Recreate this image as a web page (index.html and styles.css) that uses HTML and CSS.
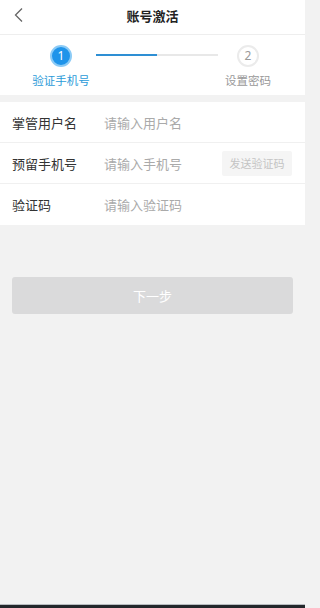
FILE: index.html
```html
<!DOCTYPE html>
<html lang="zh">
<head>
<meta charset="utf-8">
<link rel="stylesheet" href="styles.css">
</head>
<body>
<div class="page">
  <header class="nav">
    <span class="back">
      <svg width="12" height="16" viewBox="0 0 12 16"><path d="M9 1.5 L2.5 8 L9 14.5" fill="none" stroke="#666" stroke-width="1.3"/></svg>
    </span>
    <h1 class="title">账号激活</h1>
  </header>
  <section class="steps">
    <div class="step active">
      <span class="dot">1</span>
      <span class="label">验证手机号</span>
    </div>
    <div class="track"><div class="fill"></div></div>
    <div class="step">
      <span class="dot">2</span>
      <span class="label">设置密码</span>
    </div>
  </section>
  <section class="form">
    <div class="row">
      <span class="key">掌管用户名</span>
      <span class="ph">请输入用户名</span>
    </div>
    <div class="row">
      <span class="key">预留手机号</span>
      <span class="ph">请输入手机号</span>
      <span class="send">发送验证码</span>
    </div>
    <div class="row">
      <span class="key">验证码</span>
      <span class="ph">请输入验证码</span>
    </div>
  </section>
  <div class="actions">
    <button class="next">下一步</button>
  </div>
  <div class="spacer"></div>
  <div class="homebar"></div>
</div>
</body>
</html>
```
FILE: styles.css
```css
* { box-sizing: border-box; }
html, body { margin: 0; padding: 0; }
body {
  font-family: "Noto Sans CJK SC", "Noto Sans", sans-serif;
  background: #f2f2f2;
  color: #333;
}
.page {
  width: 305px;
  height: 608px;
  display: flex;
  flex-direction: column;
}
.nav {
  height: 35px;
  background: #fff;
  border-bottom: 1px solid #eeeeee;
  display: flex;
  align-items: center;
  justify-content: center;
  position: relative;
}
.back {
  position: absolute;
  left: 13px;
  top: 7px;
  display: flex;
}
.title {
  margin: 0;
  font-size: 13px;
  font-weight: 700;
  color: #222;
  line-height: 1;
  margin-top: -4px;
}
.steps {
  height: 60px;
  background: #fff;
  display: flex;
  align-items: flex-start;
  padding: 10px 0 0;
}
.step {
  width: 92px;
  display: flex;
  flex-direction: column;
  align-items: center;
}
.step:first-child { margin-left: 15px; }
.step:last-child { width: 60px; margin-left: 0; }
.dot {
  width: 22px;
  height: 22px;
  border-radius: 50%;
  border: 2px solid #ebebeb;
  background: #fff;
  color: #999;
  font-family: "Noto Sans", sans-serif;
  font-size: 12px;
  display: flex;
  align-items: center;
  justify-content: center;
  line-height: 1;
}
.step.active .dot {
  background: #1f94ea;
  border-color: #8ccbf6;
  color: #fff;
}
.label {
  margin-top: 5px;
  font-size: 11.5px;
  color: #999;
  line-height: 16px;
}
.step.active .label { color: #2b9bd9; }
.track {
  width: 122px;
  height: 2px;
  background: #e8e8e8;
  margin-top: 9px;
  margin-left: -11px;
  margin-right: 0;
}
.step:last-child { margin-left: 0; }
.fill {
  width: 61px;
  height: 2px;
  background: #2e8fd4;
}
.form {
  margin-top: 7px;
  background: #fff;
}
.row {
  height: 41px;
  display: flex;
  align-items: center;
  padding: 0 13px 0 12px;
  border-bottom: 1px solid #f0f0f0;
  font-size: 13px;
}
.row:last-child { border-bottom: none; }
.key {
  width: 92px;
  color: #333;
}
.ph {
  flex: 1;
  color: #aaa;
}
.send {
  background: #f5f5f5;
  color: #c4c4c4;
  font-size: 11px;
  width: 70px;
  height: 25px;
  border-radius: 2px;
  display: flex;
  align-items: center;
  justify-content: center;
}
.actions {
  padding: 52px 12px 0 12px;
}
.next {
  width: 100%;
  height: 37px;
  border: none;
  border-radius: 3px;
  background: #dadadb;
  color: #fff;
  font-family: inherit;
  font-size: 13px;
  padding: 0;
}
.spacer { flex: 1; }
.homebar {
  height: 3px;
  background: #23272b;
  border-top: 1px solid #b8bcc0;
  height: 4px;
}
```
